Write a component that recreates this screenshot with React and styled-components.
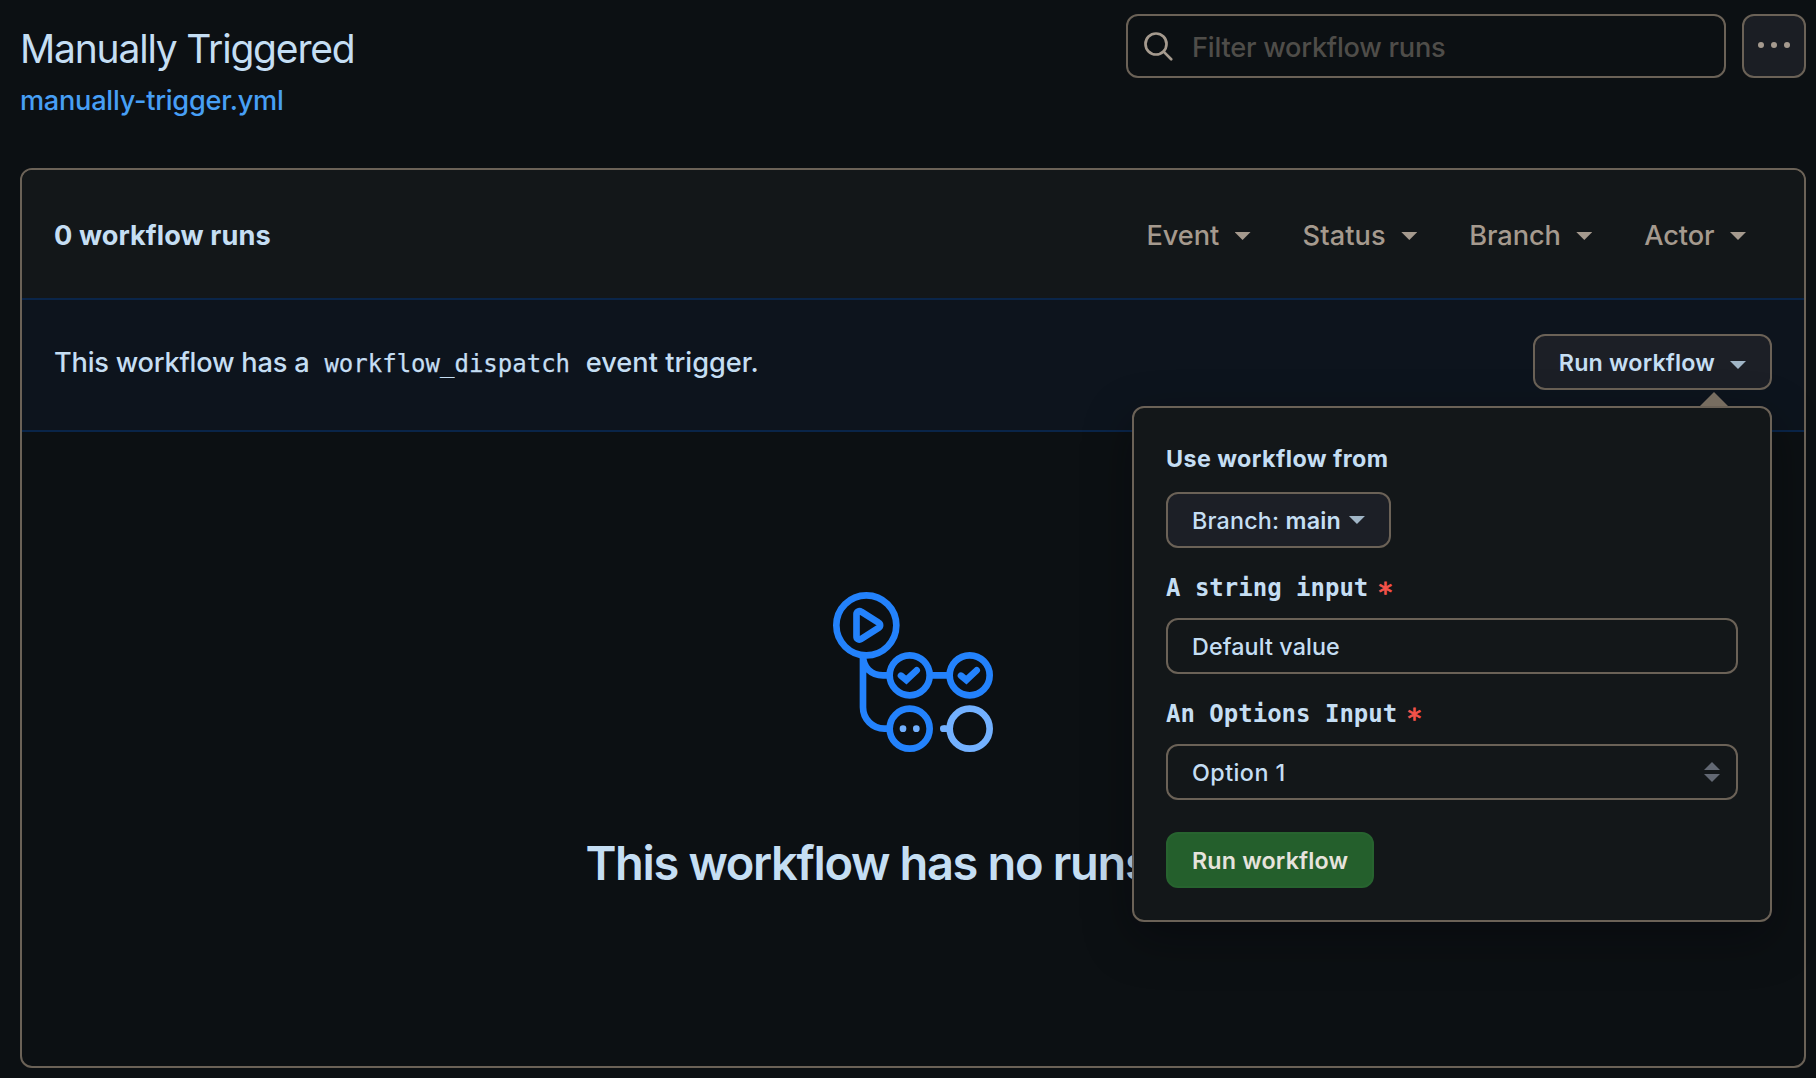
import React from 'react';
import styled, { createGlobalStyle, ThemeProvider } from 'styled-components';

const theme = {
  canvas: '#0c1013',
  subtle: '#131719',
  line: '#6b6257',
  text: '#c5def3',
  muted: '#a59a8e',
  sans: 'Inter, "Liberation Sans", sans-serif',
  mono: '"DejaVu Sans Mono", "Liberation Mono", monospace',
};

const GlobalStyle = createGlobalStyle`
  * { box-sizing: border-box; }
  html, body { margin: 0; background: #0c1013; }
  button, input { font: inherit; color: inherit; margin: 0; }
`;

const Page = styled.main`
  display: flex;
  flex-direction: column;
  width: 1816px;
  height: 1078px;
  padding: 14px 10px 10px 20px;
  overflow: hidden;
  background: ${(p) => p.theme.canvas};
  color: ${(p) => p.theme.text};
  font-family: ${(p) => p.theme.sans};
  font-size: 27.2px;
  font-weight: 450;
`;

const PageHeader = styled.header`
  display: flex;
  justify-content: space-between;
  height: 154px;
`;

const Heading = styled.div`
  display: flex;
  flex-direction: column;
  padding-top: 5px;
`;

const Title = styled.h1`
  margin: 0;
  font-size: 39px;
  font-weight: 440;
  line-height: 60px;
  letter-spacing: -1.2px;
`;

const FileLink = styled.a`
  padding-top: 1px;
  color: #479ff5;
  line-height: 42px;
  letter-spacing: -0.28px;
`;

const HeaderTools = styled.div`
  display: flex;
  gap: 16px;
  height: 64px;
`;

const SearchBox = styled.label`
  display: flex;
  align-items: center;
  gap: 18px;
  width: 600px;
  padding: 0 16px;
  border: 2px solid ${(p) => p.theme.line};
  border-radius: 12px;
`;

const SearchInput = styled.input`
  flex: 1;
  height: 60px;
  padding: 2px 0 0;
  border: 0;
  outline: 0;
  background: none;
  letter-spacing: -0.24px;
  &::placeholder {
    color: #4f4d49;
    opacity: 1;
  }
`;

const MenuButton = styled.button`
  display: flex;
  align-items: center;
  justify-content: center;
  width: 64px;
  padding: 0 0 2px;
  border: 2px solid ${(p) => p.theme.line};
  border-radius: 12px;
  background: #1b1e24;
`;

const Panel = styled.section`
  height: 900px;
  border: 2px solid ${(p) => p.theme.line};
  border-radius: 12px;
`;

const PanelHeader = styled.div`
  display: flex;
  align-items: center;
  justify-content: space-between;
  height: 128px;
  padding: 2px 58px 0 32px;
  border-radius: 10px 10px 0 0;
  background: ${(p) => p.theme.subtle};
`;

const RunCount = styled.strong`
  font-weight: 650;
  letter-spacing: 0.07px;
`;

const Filters = styled.nav`
  display: flex;
  gap: 52px;
`;

const Filter = styled.span`
  display: flex;
  align-items: center;
  gap: 15.5px;
  color: ${(p) => p.theme.muted};
  letter-spacing: ${(p) => p.$tracking || 0}px;
`;

const Caret = styled.i`
  flex: none;
  width: 16px;
  height: 8px;
  margin-top: ${(p) => p.$drop || 0}px;
  background: ${(p) => p.$color || 'currentColor'};
  clip-path: ${(p) => (p.$up ? 'polygon(50% 0, 100% 100%, 0 100%)' : 'polygon(0 0, 100% 0, 50% 100%)')};
`;

const Notice = styled.div`
  display: flex;
  justify-content: space-between;
  height: 134px;
  padding: 34px 32px;
  border-top: 2px solid #0a2549;
  border-bottom: 2px solid #0a2549;
  background: #0d141d;
`;

const NoticeText = styled.p`
  margin: 0;
  padding-top: 1px;
  line-height: 56px;
  letter-spacing: -0.22px;
`;

const Code = styled.code`
  margin: 0 8.5px 0 8px;
  font-family: ${(p) => p.theme.mono};
  font-size: 24px;
  line-height: 1;
  letter-spacing: 0;
  -webkit-text-stroke: 0.25px currentColor;
`;

const Trailing = styled.span`
  letter-spacing: 0;
`;

const Dispatch = styled.div`
  position: relative;
  height: 56px;
`;

const Button = styled.button`
  display: flex;
  align-items: center;
  gap: ${(p) => p.$gap || 0}px;
  height: 56px;
  padding: 0 24px;
  border: 2px solid ${(p) => (p.$primary ? '#27632f' : p.theme.line)};
  border-radius: 12px;
  background: ${(p) => (p.$primary ? '#245f2c' : '#1c1f26')};
  color: ${(p) => (p.$primary ? '#e6e3dc' : 'inherit')};
  font-size: 23.3px;
  font-weight: ${(p) => p.$weight || 560};
  letter-spacing: ${(p) => p.$tracking || 0.15}px;
  white-space: nowrap;
  b { font-weight: 630; }
`;

const Popover = styled.form`
  position: absolute;
  top: 72px;
  right: 0;
  z-index: 2;
  display: flex;
  flex-direction: column;
  align-items: flex-start;
  width: 640px;
  height: 516px;
  padding: 32px;
  border: 2px solid ${(p) => p.theme.line};
  border-radius: 12px;
  background: ${(p) => p.theme.subtle};
  box-shadow: 0 16px 48px rgba(1, 4, 9, 0.35);
  font-size: 23.3px;

  &::before {
    content: '';
    position: absolute;
    top: -16px;
    right: 42px;
    width: 28px;
    height: 14px;
    background: #776d60;
    clip-path: polygon(50% 0, 100% 100%, 0 100%);
  }
`;

const FormTitle = styled.div`
  padding-top: 1px;
  margin-bottom: 15px;
  font-weight: 650;
  line-height: 36px;
  letter-spacing: 0.42px;
`;

const FieldLabel = styled.label`
  display: flex;
  gap: 9px;
  height: 36px;
  margin: 22px 0 12px;
  font: 700 24px/36px ${(p) => p.theme.mono};
`;

const Required = styled.span`
  padding-top: 5px;
  color: #f4524a;
  font-size: 27px;
  font-weight: 400;
  -webkit-text-stroke: 0.9px #f4524a;
`;

const Field = styled.div`
  display: flex;
  align-items: center;
  justify-content: space-between;
  width: 100%;
  height: 56px;
  padding: 0 16px 0 24px;
  border: 2px solid ${(p) => p.theme.line};
  border-radius: 12px;
  letter-spacing: ${(p) => p.$tracking}px;
`;

const Stepper = styled.span`
  display: flex;
  flex-direction: column;
  gap: 4px;
`;

const Actions = styled.div`
  margin-top: 32px;
`;

const Blankslate = styled.div`
  display: flex;
  flex-direction: column;
  align-items: center;
  padding-top: 160px;
`;

const BlankTitle = styled.h2`
  margin: 75px 0 0;
  font-size: 47px;
  font-weight: 640;
  line-height: 72px;
  letter-spacing: -1.35px;
  white-space: nowrap;
`;

const SearchIcon = () => (
  <svg width="30" height="30" viewBox="0 0 30 30" fill="none" stroke="#a59a8e" strokeWidth="2.7">
    <circle cx="12" cy="13" r="10.5" />
    <path d="M19.6 20.6 27.2 28.2" strokeLinecap="round" />
  </svg>
);

const DotsIcon = () => (
  <svg width="32" height="32" viewBox="0 0 32 32" fill="#a59a8e">
    <circle cx="3" cy="16" r="3" />
    <circle cx="16" cy="16" r="3" />
    <circle cx="29" cy="16" r="3" />
  </svg>
);

const WorkflowArt = () => (
  <svg width="160" height="160" viewBox="39 36 480 480" fill="none" stroke="#2382fc" strokeWidth="20">
    <path d="M129 226V382a64 64 0 0 0 64 64h16M129 226c0 36 24 60 60 60h20M329 286h60" />
    <circle cx="139" cy="136" r="90" />
    <path d="M109.5 103v66a9 9 0 0 0 14 8l52-33a9 9 0 0 0 0-16l-52-33a9 9 0 0 0-14 8z" />
    <circle cx="269" cy="286" r="60" />
    <circle cx="449" cy="286" r="60" />
    <circle cx="269" cy="446" r="60" />
    <path d="m243 287 16 13 31-29M423 287l16 13 31-29" strokeLinecap="round" />
    <g stroke="#73b1ff">
      <circle cx="449" cy="446" r="60" />
      <path d="M370 446h1" strokeLinecap="round" />
      <path d="M371 446h14" />
    </g>
    <g fill="#73b1ff" stroke="none">
      <circle cx="249" cy="446" r="10" />
      <circle cx="289" cy="446" r="10" />
    </g>
  </svg>
);

const filters = [
  { name: 'Event', tracking: -0.1 },
  { name: 'Status', tracking: 0.1 },
  { name: 'Branch', tracking: -0.1 },
  { name: 'Actor', tracking: -0.1 },
];

export default function App() {
  return (
    <ThemeProvider theme={theme}>
      <GlobalStyle />
      <Page>
        <PageHeader>
          <Heading>
            <Title>Manually Triggered</Title>
            <FileLink>manually-trigger.yml</FileLink>
          </Heading>
          <HeaderTools>
            <SearchBox>
              <SearchIcon />
              <SearchInput placeholder="Filter workflow runs" />
            </SearchBox>
            <MenuButton type="button">
              <DotsIcon />
            </MenuButton>
          </HeaderTools>
        </PageHeader>

        <Panel>
          <PanelHeader>
            <RunCount>0 workflow runs</RunCount>
            <Filters>
              {filters.map((f) => (
                <Filter key={f.name} $tracking={f.tracking}>
                  {f.name}
                  <Caret $drop={2} />
                </Filter>
              ))}
            </Filters>
          </PanelHeader>

          <Notice>
            <NoticeText>
              This workflow has a <Code>workflow_dispatch</Code>
              <Trailing> event trigger.</Trailing>
            </NoticeText>
            <Dispatch>
              <Button type="button" $gap={15}>
                Run workflow
                <Caret $drop={6} $color="#a0b5c6" />
              </Button>
              <Popover>
                <FormTitle>Use workflow from</FormTitle>
                <Button type="button" $gap={8} $weight={450} $tracking={0.17}>
                  <span>
                    Branch: <b>main</b>
                  </span>
                  <Caret $color="#a0b5c6" />
                </Button>
                <FieldLabel>
                  A string input<Required>*</Required>
                </FieldLabel>
                <Field $tracking={0.1}>Default value</Field>
                <FieldLabel>
                  An Options Input<Required>*</Required>
                </FieldLabel>
                <Field $tracking={0.45}>
                  Option 1
                  <Stepper>
                    <Caret $up $color="#626873" />
                    <Caret $color="#626873" />
                  </Stepper>
                </Field>
                <Actions>
                  <Button type="button" $primary>
                    Run workflow
                  </Button>
                </Actions>
              </Popover>
            </Dispatch>
          </Notice>

          <Blankslate>
            <WorkflowArt />
            <BlankTitle>This workflow has no runs yet.</BlankTitle>
          </Blankslate>
        </Panel>
      </Page>
    </ThemeProvider>
  );
}
